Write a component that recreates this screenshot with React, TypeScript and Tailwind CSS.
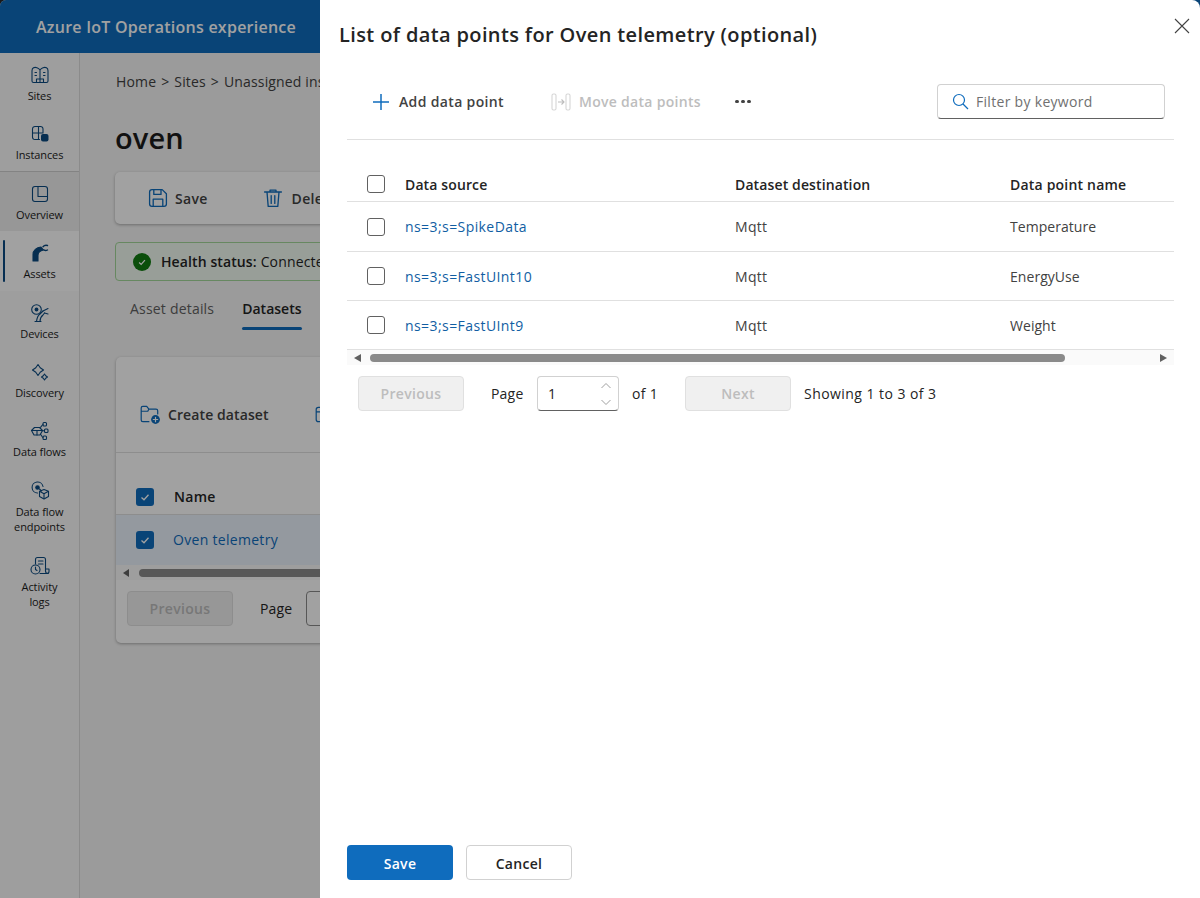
import React from "react";

const blue = "#0f6cbd";

function Ic({ children, size = 20, vb = 20, className = "" }: { children: React.ReactNode; size?: number; vb?: number; className?: string }) {
  return (
    <svg width={size} height={size} viewBox={`0 0 ${vb} ${vb}`} fill="none" stroke="currentColor" strokeWidth={1.1} strokeLinecap="round" strokeLinejoin="round" className={className}>
      {children}
    </svg>
  );
}

const navIcons: Record<string, React.ReactNode> = {
  Sites: (
    <>
      <path d="M10 5C8.500 2.800 5.500 1.800 3.500 2.800 2.500 3.300 2 4.300 2 5.800V16c0 1 .6 1.500 1.500 1.500h13c.9 0 1.500-.5 1.500-1.500V5.800c0-1.500-.5-2.500-1.500-3-2-1-5 0-6.500 2.200zM10 5v12.500" />
      <path d="M6.500 17.500v-3.500h7v3.500M5 7.500h1.500M5 10.500h1.500M13.500 7.500H15M13.500 10.500H15" />
    </>
  ),
  Instances: (
    <>
      <path d="M13 8.500V5a2.500 2.500 0 0 0-2.500-2.500H5A2.500 2.500 0 0 0 2.500 5v8A2.500 2.500 0 0 0 5 15.500h4.500M2.500 9H13M8.500 2.500v13" />
      <rect x="11" y="10" width="7.500" height="7.500" rx="2" fill="currentColor" stroke="none" />
    </>
  ),
  Overview: (
    <>
      <rect x="2.500" y="2.500" width="15" height="15" rx="2.500" />
      <path d="M8 2.500v10h9.500" />
    </>
  ),
  Assets: (
    <>
      <path d="M3 18v-6.500C3 7.500 6.500 4.500 11 4l2.500 3C10.500 7.500 8 9.500 8 12.500V18z" fill="currentColor" />
      <path d="M13 3.800c1-1.300 2.600-1.800 4.500-1.300M13.800 6.800c1 .9 2.400 1 3.700.2" strokeWidth={1.400} />
    </>
  ),
  Devices: (
    <>
      <circle cx="6.500" cy="6.500" r="4.800" />
      <circle cx="6.500" cy="6.500" r="1.900" fill="currentColor" stroke="none" />
      <path d="M5 18.500h6M6.500 18.500c.5-3.500 1-6 3.500-7.500l3-3M10 18.500c0-3 1-5 3-6.500l1.500-2" />
      <path d="M14.500 10l3.500 1M13 8l5-2.500" />
    </>
  ),
  Discovery: (
    <>
      <path d="M8 2.500l2.200 3.300 3.300 2.200-3.300 2.200L8 13.500l-2.200-3.300L2.500 8l3.300-2.200z" />
      <path d="M14.500 12l1.200 1.800 1.800 1.200-1.800 1.200-1.200 1.800-1.200-1.800-1.800-1.200 1.800-1.200z" />
    </>
  ),
  "Data flows": (
    <>
      <path d="M1.500 9.500l3-3h5l3 3-2.500 4.500h-6z" />
      <path d="M1.800 9.500h10.400M7 9.500V14" />
      <rect x="13" y="1.500" width="3.500" height="3.500" rx="1" />
      <rect x="14.500" y="8" width="3.500" height="3.500" rx="1" />
      <rect x="13" y="15" width="3.500" height="3.500" rx="1" />
      <path d="M10 6.500c1.500 0 2-3 3-3M12.500 9.800h2M10.500 13.500c1 0 1.500 3 2.500 3" />
    </>
  ),
  "Data flow endpoints": (
    <>
      <path d="M7.500 12a5.500 5.500 0 1 1 5.500-6.500" />
      <circle cx="7.500" cy="6.500" r="2.300" fill="currentColor" stroke="none" />
      <path d="M9.500 8l2 2" />
      <path d="M14 8.500l4.500 1.800v5.200L14 18l-4.500-2.500v-5.200z" />
      <path d="M10 10.500l4 2.200 4-2.200M14 12.700V17" />
    </>
  ),
  "Activity logs": (
    <>
      <path d="M5.500 8V3.500a2 2 0 0 1 2-2h6a2 2 0 0 1 2 2V15c0 1.500 1 2.500 2.500 2.500H10" />
      <path d="M15.500 13H19v2.500a2 2 0 0 1-2 2M8.500 5H13M8.500 8H13" />
      <circle cx="5.500" cy="13.500" r="4.500" />
      <path d="M5.500 11v2.500l1.500 1" />
    </>
  ),
};

function NavItem({ label, lines, active, h = 59 }: { label: string; lines?: string[]; active?: boolean; h?: number }) {
  return (
    <div className="relative flex flex-col items-center pt-[12px]" style={{ height: h }}>
      {active && <div className="absolute left-[3px] top-[9px] h-[42px] w-[2px] rounded bg-[#0a4a82]" />}
      <Ic className="text-[#0b4a80]">{navIcons[label]}</Ic>
      <div className="mt-[3px] text-center text-[11px] leading-[15px] tracking-[-0.1px] text-[#1c1c1c]">
        {(lines ?? [label]).map((l) => (
          <div key={l}>{l}</div>
        ))}
      </div>
    </div>
  );
}

function Check({ checked }: { checked?: boolean }) {
  if (checked)
    return (
      <div className="flex h-[18px] w-[18px] shrink-0 items-center justify-center rounded-[3px] bg-[#0f6cbd]">
        <svg width="12" height="12" viewBox="0 0 12 12" fill="none" stroke="#fff" strokeWidth="1.300">
          <path d="M2.500 6.500l2.500 2.300 4.500-5" />
        </svg>
      </div>
    );
  return <div className="h-[18px] w-[18px] rounded-[3px] border border-[#616161] bg-white" />;
}

const rows = [
  { src: "ns=3;s=SpikeData", dest: "Mqtt", name: "Temperature", h: 50 },
  { src: "ns=3;s=FastUInt10", dest: "Mqtt", name: "EnergyUse", h: 49 },
  { src: "ns=3;s=FastUInt9", dest: "Mqtt", name: "Weight", h: 49 },
];

export default function App() {
  return (
    <div className="relative h-[898px] w-[1200px] overflow-hidden bg-[#2a2a2a] font-['Open_Sans','Noto_Sans',sans-serif] text-[14px] tracking-[0.15px]">
      {/* page behind the drawer */}
      <div className="flex h-full w-full flex-col overflow-hidden rounded-tl-[6px] bg-[#f5f5f5]">
        <header className="flex h-[53px] shrink-0 items-center bg-[#0f6cbd] pl-[36px] text-[16px] font-semibold tracking-[0.25px] text-white">
          Azure IoT Operations experience
        </header>
        <div className="flex min-h-0 flex-1">
          <aside className="w-[80px] shrink-0 border-r border-[#dcdcdc] bg-[#fafafa]">
            <NavItem label="Sites" />
            <NavItem label="Instances" />
            <div className="h-px bg-[#d0d0d0]" />
            <div className="bg-[#efefef]">
              <NavItem label="Overview" />
            </div>
            <div className="bg-white">
              <NavItem label="Assets" active h={60} />
            </div>
            <NavItem label="Devices" />
            <NavItem label="Discovery" />
            <NavItem label="Data flows" h={60} />
            <NavItem label="Data flow endpoints" lines={["Data flow", "endpoints"]} h={75} />
            <NavItem label="Activity logs" lines={["Activity", "logs"]} h={75} />
          </aside>
          <main className="w-[240px] shrink-0 overflow-visible pl-[35px] pt-[19px] text-[#333]">
            <div className="w-[600px]">
              <div className="flex gap-[5px] pl-[1px] text-[14px] leading-[20px] tracking-[0.15px] text-[#424242]">
                <span>Home</span>
                <span>&gt;</span>
                <span>Sites</span>
                <span>&gt;</span>
                <span>Unassigned instances</span>
              </div>
              <h1 className="mt-[26px] text-[29px] font-semibold leading-[40px] text-[#1c1c1c]">oven</h1>
              <div className="mt-[14px] flex h-[52px] items-center rounded-[5px] bg-white pl-[31px] font-semibold tracking-[0.3px] text-[#424242] shadow-[0_1px_3px_rgba(0,0,0,0.3)]">
                <span className="flex items-center gap-[5px]">
                  <Ic size={24} className="text-[#0f6cbd]">
                    <path d="M3 5a2 2 0 0 1 2-2h8.500L17 6.500V15a2 2 0 0 1-2 2H5a2 2 0 0 1-2-2z" />
                    <path d="M6.500 3v4h6V3M6 17v-6h8v6" />
                  </Ic>
                  Save
                </span>
                <span className="ml-[53px] flex items-center gap-[7px]">
                  <Ic size={24} className="text-[#0f6cbd]">
                    <path d="M3 5h14M7.500 5V3.500h5V5M5 5l1 12h8l1-12M8.500 8v6.500M11.500 8v6.500" />
                  </Ic>
                  Delete
                </span>
              </div>
              <div className="mt-[18px] flex h-[39px] items-center rounded-[4px] border border-[#a4d89a] bg-[#f1faf1] pl-[17px] text-[#242424]">
                <span className="mr-[10px] flex h-[18px] w-[18px] items-center justify-center rounded-full bg-[#107c10]">
                  <svg width="10" height="10" viewBox="0 0 12 12" fill="none" stroke="#fff" strokeWidth="1.500">
                    <path d="M2.500 6.500l2.500 2.300 4.500-5" />
                  </svg>
                </span>
                <b className="mr-[4px] font-semibold tracking-[0.1px]">Health status:</b> Connected
              </div>
              <div className="mt-[16px] flex h-[33px] pl-[15px] text-[#616161]">
                <div className="pt-[1px] tracking-[0.2px]">Asset details</div>
                <div className="relative ml-[28px] pt-[1px] font-semibold tracking-[0px] text-[#242424]">
                  Datasets
                  <div className="absolute inset-x-0 bottom-0 h-[3px] rounded bg-[#0f6cbd]" />
                </div>
              </div>
              <div className="ml-[1px] mt-[27px] h-[286px] rounded-[5px] bg-white shadow-[0_1px_3px_rgba(0,0,0,0.3)]">
                <div className="flex h-[96px] items-end border-b border-[#e0e0e0] pb-[27px] pl-[23px] font-semibold tracking-[0.1px] text-[#424242]">
                  <span className="flex items-center gap-[7px]">
                    <Ic size={22} className="text-[#0f6cbd]">
                      <path d="M9 17H3.500A1.500 1.500 0 0 1 2 15.500v-11A1.500 1.500 0 0 1 3.500 3H7l2 2.500h6.500A1.500 1.500 0 0 1 17 7v3M2 7.500h6l1-2" />
                      <circle cx="15" cy="15" r="4" fill="currentColor" stroke="none" />
                      <path d="M15 13v4M13 15h4" stroke="#fff" />
                    </Ic>
                    Create dataset
                  </span>
                  <span className="ml-[45px] flex items-center">
                    <Ic size={22} className="text-[#0f6cbd]">
                      <path d="M2 6a2 2 0 0 1 2-2h12a2 2 0 0 1 2 2v9a2 2 0 0 1-2 2H4a2 2 0 0 1-2-2zM2 8h16" />
                    </Ic>
                  </span>
                </div>
                <div className="flex h-[62px] items-end gap-[20px] border-b border-[#e0e0e0] pb-[7px] pl-[20px] font-semibold tracking-[0.3px] text-[#242424]">
                  <div className="mb-[1px]"><Check checked /></div> Name
                </div>
                <div className="flex h-[50px] items-center gap-[19px] bg-[#ebf3fc] pl-[20px] tracking-[0.3px] text-[#0f6cbd]">
                  <Check checked /> <span className="pb-[2px]">Oven telemetry</span>
                </div>
                <div className="flex h-[15px] items-center bg-[#fafafa] pl-[7px]">
                  <span className="mr-[10px] h-0 w-0 border-y-[4px] border-r-[6px] border-y-transparent border-r-[#616161]" />
                  <span className="h-[8px] flex-1 rounded-full bg-[#8a8a8a]" />
                </div>
                <div className="mt-[11px] flex items-center pl-[11px]">
                  <button className="h-[35px] w-[106px] rounded-[4px] border border-[#e0e0e0] bg-[#f0f0f0] font-semibold tracking-[0.3px] text-[#bdbdbd]">Previous</button>
                  <span className="ml-[27px] text-[#242424]">Page</span>
                  <span className="ml-[14px] h-[35px] w-[82px] rounded-[4px] border border-[#8a8a8a] bg-white" />
                </div>
              </div>
            </div>
          </main>
        </div>
      </div>
      {/* dim layer */}
      <div className="absolute inset-0 bg-black/[.37]" />
      {/* drawer */}
      <div className="absolute bottom-0 left-[320px] right-0 top-0 flex flex-col rounded-tr-[8px] bg-white text-[#242424]">
        <h2 className="pl-[19px] pt-[21px] text-[20px] font-semibold leading-[28px] tracking-[0.37px] text-[#242424]">
          List of data points for Oven telemetry (optional)
        </h2>
        <button className="absolute right-[10px] top-[18px] text-[#424242]">
          <svg width="16" height="16" viewBox="0 0 16 16" fill="none" stroke="currentColor" strokeWidth="1.100">
            <path d="M1 1l14 14M15 1L1 15" />
          </svg>
        </button>

        <div className="ml-[27px] mr-[26px] mt-[18px]">
          <div className="flex h-[73px] items-center border-b border-[#e0e0e0] pb-[3px]">
            <span className="ml-[25px] flex items-center font-semibold tracking-[0.35px] text-[#424242]">
              <svg width="18" height="18" viewBox="0 0 18 18" fill="none" stroke={blue} strokeWidth="1.500" className="mr-[9px]">
                <path d="M9 1v16M1 9h16" />
              </svg>
              Add data point
            </span>
            <span className="ml-[47px] flex items-center font-semibold tracking-[0.3px] text-[#bdbdbd]">
              <svg width="20" height="18" viewBox="0 0 20 18" fill="none" stroke="#d6d6d6" strokeWidth="1.100" className="mr-[8px]">
                <rect x="1" y="1" width="4" height="16" rx="1.500" />
                <rect x="15" y="1" width="4" height="16" rx="1.500" />
                <path d="M7 9h5.500M10.500 6.500L13 9l-2.500 2.500" stroke="#bdbdbd" />
              </svg>
              Move data points
            </span>
            <span className="ml-[34px] flex gap-[2px]">
              <i className="h-[3px] w-[4px] rounded-full bg-[#424242]" />
              <i className="h-[3px] w-[4px] rounded-full bg-[#424242]" />
              <i className="h-[3px] w-[4px] rounded-full bg-[#424242]" />
            </span>
            <div className="ml-auto mr-[9px] flex h-[35px] w-[228px] items-center rounded-[4px] border border-[#d1d1d1] border-b-[#616161] pl-[14px] tracking-[0.3px] text-[#707070]">
              <svg width="17" height="17" viewBox="0 0 17 17" fill="none" stroke={blue} strokeWidth="1.200" className="mr-[7px]">
                <circle cx="7" cy="7" r="5.500" />
                <path d="M11 11l5 5" />
              </svg>
              Filter by keyword
            </div>
          </div>

          <div className="mt-[26px]">
            <div className="grid h-[36px] grid-cols-[58px_330px_275px_1fr] items-center border-b border-[#e0e0e0] font-semibold tracking-[0.12px]">
              <div className="pl-[20px]"><Check /></div>
              <div className="pt-[2px]">Data source</div>
              <div className="pt-[2px]">Dataset destination</div>
              <div className="pt-[2px] tracking-[0.2px]">Data point name</div>
            </div>
            {rows.map((r) => (
              <div key={r.src} className="grid grid-cols-[58px_330px_275px_1fr] items-center border-b border-[#e0e0e0] tracking-[0.05px]" style={{ height: r.h }}>
                <div className="pl-[20px]"><Check /></div>
                <div className="tracking-[0.42px] text-[#115ea3]">{r.src}</div>
                <div className="tracking-[0.3px] text-[#424242]">{r.dest}</div>
                <div className="text-[#424242]">{r.name}</div>
              </div>
            ))}
            <div className="flex h-[15px] items-center bg-[#fafafa] pl-[7px] pr-[7px]">
              <span className="h-0 w-0 border-y-[4px] border-r-[7px] border-y-transparent border-r-[#616161]" />
              <span className="ml-[9px] h-[8px] w-[695px] rounded-full bg-[#8a8a8a]" />
              <span className="ml-auto h-0 w-0 border-y-[4px] border-l-[7px] border-y-transparent border-l-[#616161]" />
            </div>
            <div className="mt-[11px] flex items-center pl-[11px]">
              <button className="h-[35px] w-[106px] rounded-[4px] border border-[#e0e0e0] bg-[#f0f0f0] font-semibold tracking-[0.3px] text-[#bdbdbd]">Previous</button>
              <span className="ml-[27px] w-[32px] tracking-[0.2px]">Page</span>
              <div className="relative ml-[14px] flex h-[35px] w-[82px] items-center rounded-[4px] border border-[#d1d1d1] border-b-[#616161] pl-[10px]">
                1
                <svg width="12" height="28" viewBox="0 0 12 28" fill="none" stroke="#a0a0a0" strokeWidth="1" className="absolute right-[6px] top-[3px]">
                  <path d="M1.500 8L6 3.500 10.500 8M1.500 20L6 24.500 10.500 20" />
                </svg>
              </div>
              <span className="ml-[13px] w-[27px] whitespace-nowrap tracking-[0.3px]">of 1</span>
              <button className="ml-[26px] h-[35px] w-[106px] rounded-[4px] border border-[#e0e0e0] bg-[#f0f0f0] font-semibold tracking-[0.3px] text-[#bdbdbd]">Next</button>
              <span className="ml-[13px] tracking-[0.45px]">Showing 1 to 3 of 3</span>
            </div>
          </div>
        </div>

        <div className="mt-auto flex gap-[13px] pb-[18px] pl-[27px] tracking-[0.3px]">
          <button className="h-[35px] w-[106px] rounded-[4px] bg-[#0f6cbd] pt-[1px] font-semibold text-white">Save</button>
          <button className="h-[35px] w-[106px] rounded-[4px] border border-[#d1d1d1] bg-white pt-[1px] font-semibold text-[#242424]">Cancel</button>
        </div>
      </div>
    </div>
  );
}
